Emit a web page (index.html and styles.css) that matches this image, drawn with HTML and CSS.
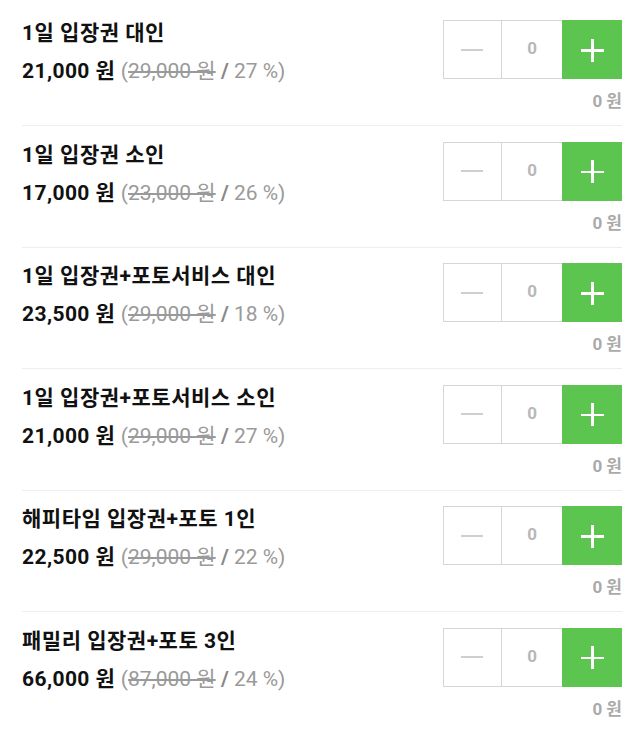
FILE: index.html
```html
<!DOCTYPE html>
<html>
<head>
  <meta charset="UTF-8" />
  <title>입장권 선택</title>
  <link rel="stylesheet" href="styles.css">
</head>
<body>
  <div class="list">
    <div class="item">
      <div class="info">
        <div class="name">1일 입장권 대인</div>
        <div class="price">21,000 원 <span class="orig">(<del>29,000 원</del> <b>/</b> 27 %)</span></div>
      </div>
      <div class="order">
        <div class="stepper">
          <div class="minus"><span></span></div>
          <div class="count">0</div>
          <div class="plus"><span></span></div>
        </div>
        <div class="sum">0 원</div>
      </div>
    </div>
    <div class="item">
      <div class="info">
        <div class="name">1일 입장권 소인</div>
        <div class="price">17,000 원 <span class="orig">(<del>23,000 원</del> <b>/</b> 26 %)</span></div>
      </div>
      <div class="order">
        <div class="stepper">
          <div class="minus"><span></span></div>
          <div class="count">0</div>
          <div class="plus"><span></span></div>
        </div>
        <div class="sum">0 원</div>
      </div>
    </div>
    <div class="item">
      <div class="info">
        <div class="name">1일 입장권+포토서비스 대인</div>
        <div class="price">23,500 원 <span class="orig">(<del>29,000 원</del> <b>/</b> 18 %)</span></div>
      </div>
      <div class="order">
        <div class="stepper">
          <div class="minus"><span></span></div>
          <div class="count">0</div>
          <div class="plus"><span></span></div>
        </div>
        <div class="sum">0 원</div>
      </div>
    </div>
    <div class="item">
      <div class="info">
        <div class="name">1일 입장권+포토서비스 소인</div>
        <div class="price">21,000 원 <span class="orig">(<del>29,000 원</del> <b>/</b> 27 %)</span></div>
      </div>
      <div class="order">
        <div class="stepper">
          <div class="minus"><span></span></div>
          <div class="count">0</div>
          <div class="plus"><span></span></div>
        </div>
        <div class="sum">0 원</div>
      </div>
    </div>
    <div class="item">
      <div class="info">
        <div class="name">해피타임 입장권+포토 1인</div>
        <div class="price">22,500 원 <span class="orig">(<del>29,000 원</del> <b>/</b> 22 %)</span></div>
      </div>
      <div class="order">
        <div class="stepper">
          <div class="minus"><span></span></div>
          <div class="count">0</div>
          <div class="plus"><span></span></div>
        </div>
        <div class="sum">0 원</div>
      </div>
    </div>
    <div class="item">
      <div class="info">
        <div class="name">패밀리 입장권+포토 3인</div>
        <div class="price">66,000 원 <span class="orig">(<del>87,000 원</del> <b>/</b> 24 %)</span></div>
      </div>
      <div class="order">
        <div class="stepper">
          <div class="minus"><span></span></div>
          <div class="count">0</div>
          <div class="plus"><span></span></div>
        </div>
        <div class="sum">0 원</div>
      </div>
    </div>
  </div>
</body>
</html>
```

FILE: styles.css
```css
* {
  box-sizing: border-box;
}
body {
  margin: 0;
  background: #fff;
  font-family: Roboto, "Noto Sans CJK KR", sans-serif;
  color: #111;
}
.list {
  padding: 4.5px 18px 0 22px;
}
.item {
  display: flex;
  justify-content: space-between;
  height: 121.5px;
  padding-top: 15.5px;
  border-bottom: 1px solid #eeeeee;
}
.item:last-child {
  border-bottom: none;
}
.item .name {
  font-size: 21px;
  font-weight: bold;
  letter-spacing: 0.5px;
  line-height: 26px;
}
.item .price {
  margin-top: 12px;
  font-size: 21px;
  font-weight: bold;
  letter-spacing: 0.4px;
  line-height: 26px;
}
.item .orig {
  font-weight: normal;
  letter-spacing: 0;
  color: #9a9a9a;
}
.item .orig del {
  text-decoration-thickness: 1.5px;
}
.item .orig b {
  color: #888;
}
.order {
  width: 179px;
}
.stepper {
  display: flex;
  height: 59px;
  border: 1px solid #d6d6d6;
  border-right: none;
}
.stepper .minus {
  width: 58px;
  display: flex;
  align-items: center;
  justify-content: center;
  border-right: 1px solid #d6d6d6;
}
.stepper .minus span {
  width: 22px;
  height: 2px;
  background: #cfcfcf;
}
.stepper .count {
  width: 61px;
  display: flex;
  align-items: center;
  justify-content: center;
  padding-bottom: 3px;
  font-size: 17px;
  font-weight: bold;
  color: #b8b8b8;
}
.stepper .plus {
  width: 60px;
  margin-top: -1px;
  margin-bottom: -1px;
  background: #5cc550;
  position: relative;
}
.stepper .plus span,
.stepper .plus span::after {
  position: absolute;
  background: #fff;
}
.stepper .plus span {
  left: 18.5px;
  top: 29px;
  width: 23px;
  height: 2.5px;
}
.stepper .plus span::after {
  content: "";
  left: 10.25px;
  top: -10.25px;
  width: 2.5px;
  height: 23px;
}
.sum {
  margin-top: 12px;
  text-align: right;
  font-size: 17px;
  font-weight: bold;
  line-height: 20px;
  color: #aaaaaa;
}
```
